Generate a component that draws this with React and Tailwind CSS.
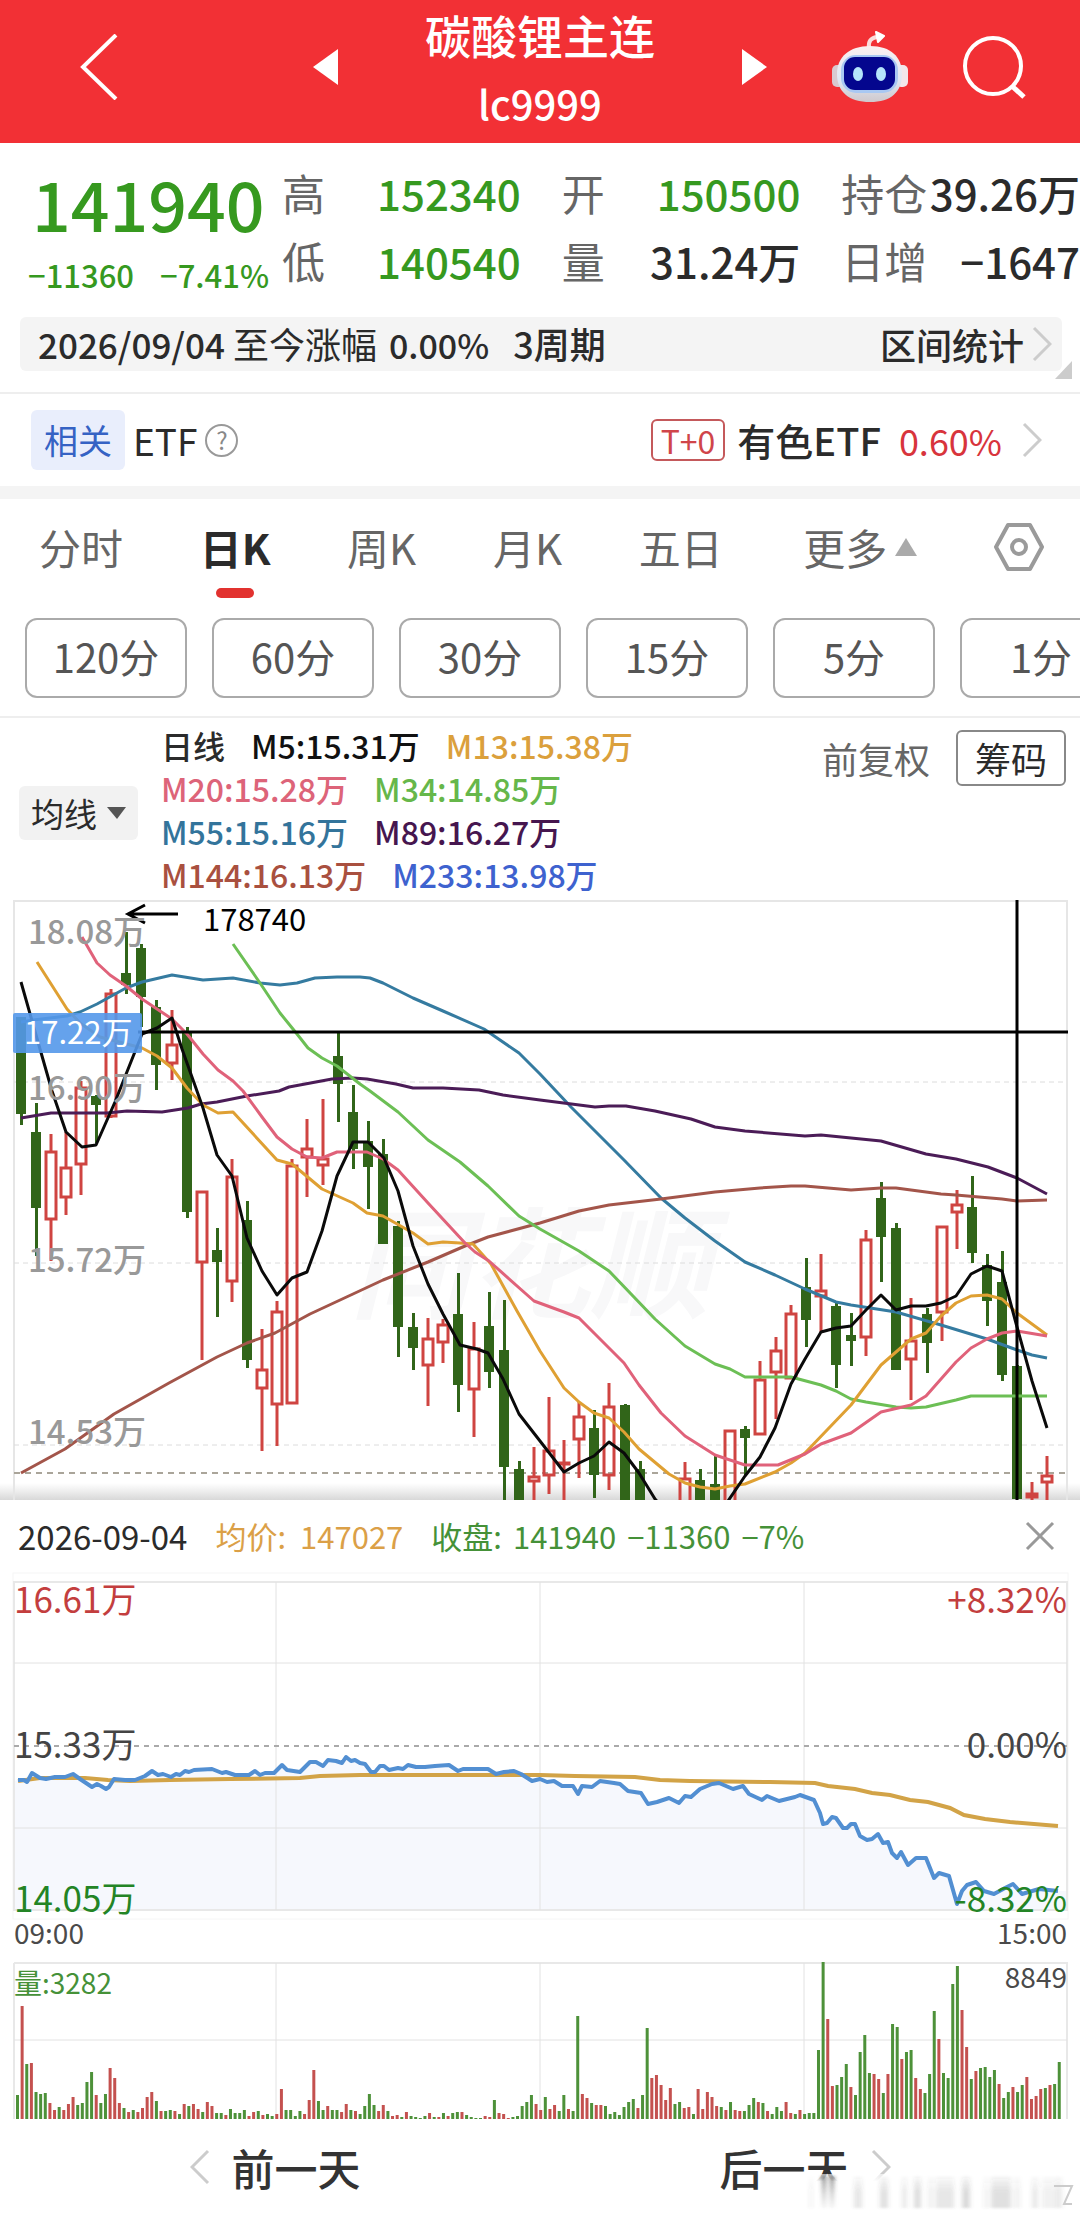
import React from "react";

const CANDLE_GREEN = "#316519";
const CANDLE_RED = "#cf4441";

/* Daily candles: [kind, high, bodyTop, bodyBottom, low] in chart units. */
const CANDLES = [
  ["g", 1016, 1016, 1113, 1124], ["g", 1102, 1131, 1207, 1255], ["r", 1133, 1150, 1219, 1260],
  ["r", 1131, 1166, 1197, 1214], ["r", 1080, 1086, 1164, 1194], ["g", 1094, 1095, 1104, 1142],
  ["r", 988, 992, 1116, 1117], ["g", 931, 972, 984, 993], ["g", 943, 947, 996, 1026],
  ["g", 999, 1006, 1064, 1089], ["r", 1009, 1043, 1063, 1079], ["g", 1026, 1030, 1211, 1217],
  ["r", 1190, 1190, 1262, 1359], ["g", 1227, 1249, 1261, 1316], ["r", 1158, 1175, 1281, 1301],
  ["g", 1200, 1219, 1359, 1367], ["r", 1328, 1368, 1388, 1450], ["r", 1300, 1310, 1404, 1445],
  ["r", 1158, 1164, 1403, 1403], ["r", 1118, 1147, 1157, 1196], ["r", 1098, 1157, 1165, 1184],
  ["g", 1032, 1055, 1083, 1121], ["g", 1084, 1111, 1148, 1168], ["g", 1120, 1140, 1166, 1208],
  ["g", 1138, 1153, 1243, 1243], ["g", 1220, 1225, 1326, 1356], ["g", 1312, 1326, 1347, 1369],
  ["r", 1317, 1337, 1365, 1405], ["r", 1318, 1323, 1342, 1362], ["g", 1272, 1313, 1384, 1411],
  ["r", 1321, 1347, 1389, 1436], ["g", 1291, 1325, 1371, 1387], ["g", 1299, 1349, 1466, 1510],
  ["g", 1460, 1468, 1510, 1510], ["r", 1446, 1475, 1481, 1510], ["r", 1396, 1449, 1475, 1493],
  ["r", 1439, 1461, 1464, 1510], ["r", 1401, 1415, 1439, 1477], ["g", 1409, 1427, 1474, 1497],
  ["r", 1382, 1405, 1475, 1489], ["g", 1403, 1404, 1510, 1510], ["g", 1460, 1468, 1510, 1510],
  null, null,
  ["r", 1461, 1477, 1510, 1510], ["g", 1468, 1479, 1510, 1510], ["g", 1454, 1483, 1510, 1510],
  ["r", 1429, 1429, 1510, 1510], ["g", 1425, 1428, 1437, 1474], ["r", 1360, 1378, 1434, 1434],
  ["r", 1336, 1349, 1372, 1418], ["r", 1304, 1312, 1378, 1378], ["g", 1257, 1286, 1319, 1346],
  ["r", 1253, 1289, 1296, 1331], ["g", 1301, 1305, 1364, 1387], ["g", 1312, 1334, 1340, 1365],
  ["r", 1229, 1238, 1337, 1355], ["g", 1181, 1197, 1236, 1281], ["g", 1222, 1227, 1369, 1369],
  ["r", 1297, 1339, 1359, 1399], ["g", 1307, 1313, 1342, 1372], ["r", 1225, 1225, 1312, 1340],
  ["r", 1189, 1203, 1212, 1248], ["g", 1175, 1206, 1252, 1262], ["g", 1253, 1264, 1300, 1325],
  ["g", 1250, 1281, 1374, 1380], ["g", 1364, 1365, 1498, 1498], ["r", 1481, 1492, 1497, 1500],
  ["r", 1455, 1474, 1482, 1500],
];

const MA_LINES = [
  { color: "#357ba0", points: "21,1021 33,1019 67,1015 80,1011 97,1003 126,987 142,981 172,974 203,979 218,978 233,977 260,982 280,984 297,982 315,977 337,976 360,976 370,977 383,982 413,997 443,1010 484,1028 519,1052 540,1073 571,1106 624,1159 661,1197 685,1217 715,1240 745,1261 775,1274 805,1288 836,1301 851,1304 896,1311 941,1324 987,1338 1017,1349 1032,1354 1047,1357" },
  { color: "#4b1c57", points: "21,1117 51,1112 107,1112 127,1110 162,1111 188,1107 201,1103 217,1101 247,1095 279,1090 289,1086 332,1078 353,1077 367,1078 396,1083 413,1087 443,1087 479,1089 503,1094 540,1099 595,1106 609,1105 626,1105 655,1110 691,1118 715,1126 745,1130 805,1135 821,1134 851,1137 881,1140 926,1153 956,1158 988,1166 1017,1177 1047,1193" },
  { color: "#a3554a", points: "21,1472 65,1448 114,1413 169,1382 217,1356 247,1342 275,1332 310,1313 353,1293 383,1279 428,1261 465,1245 488,1236 540,1222 579,1210 609,1204 661,1198 715,1191 760,1187 791,1185 805,1185 851,1189 881,1187 896,1187 941,1193 956,1194 1002,1198 1017,1200 1047,1199" },
  { color: "#6cbf55", points: "233,943 260,982 280,1012 297,1033 308,1047 322,1057 337,1065 360,1083 370,1090 398,1111 428,1139 460,1161 488,1185 519,1215 540,1228 579,1250 609,1270 655,1318 685,1345 715,1363 730,1368 745,1376 791,1376 821,1384 836,1390 851,1398 866,1401 896,1406 911,1407 926,1406 956,1399 971,1395 1047,1395" },
  { color: "#dfa033", points: "37,961 67,1008 80,1022 100,1036 142,1047 157,1055 172,1067 187,1087 203,1104 218,1112 233,1111 277,1159 292,1163 322,1188 353,1202 367,1212 383,1215 413,1232 428,1243 443,1241 460,1242 473,1243 491,1263 517,1310 540,1350 564,1387 579,1401 594,1412 609,1417 624,1431 639,1448 669,1473 685,1482 700,1486 715,1488 730,1485 745,1483 775,1471 791,1462 805,1452 851,1404 881,1364 896,1351 911,1338 926,1332 941,1315 956,1302 971,1295 987,1294 1002,1298 1017,1312 1047,1334" },
  { color: "#e0627a", points: "82,936 97,962 110,974 126,985 142,998 172,1018 187,1033 203,1053 218,1069 233,1080 243,1090 262,1116 277,1136 292,1148 307,1156 322,1157 337,1151 367,1151 383,1158 398,1169 428,1202 465,1242 475,1251 489,1260 534,1300 564,1311 579,1317 594,1332 624,1362 639,1384 661,1412 685,1435 715,1454 745,1464 778,1464 805,1453 821,1443 851,1432 881,1411 911,1404 926,1395 956,1361 971,1347 987,1338 1002,1332 1017,1330 1047,1335" },
  { color: "#0a0a0a", points: "21,981 40,1048 52,1090 66,1131 82,1146 96,1144 115,1101 142,1033 157,1027 172,1017 182,1048 203,1107 217,1154 232,1175 247,1237 262,1270 277,1294 292,1277 307,1271 322,1230 337,1175 353,1141 368,1141 384,1157 398,1190 413,1245 428,1283 443,1313 460,1344 477,1348 488,1352 503,1378 519,1413 540,1440 564,1471 579,1462 594,1455 609,1441 624,1452 639,1472 655,1498 670,1515 720,1515 728,1500 745,1475 760,1456 775,1427 791,1383 805,1358 821,1331 836,1327 851,1325 866,1309 881,1294 896,1309 911,1305 926,1305 941,1302 956,1295 971,1273 987,1265 1002,1270 1017,1326 1032,1380 1047,1427" },
];

const PRICE_LINE =
  "18,1779 24,1779 27,1781 32,1772 40,1777 46,1778 55,1776 65,1776 73,1773 80,1778 86,1782 92,1786 97,1783 101,1785 106,1788 109,1786 114,1778 125,1779 135,1779 145,1775 152,1770 158,1774 163,1773 171,1776 176,1773 180,1774 185,1770 189,1771 194,1769 212,1768 222,1772 226,1771 235,1774 249,1774 255,1770 260,1774 265,1772 274,1772 282,1764 287,1769 300,1771 310,1761 316,1761 323,1765 328,1759 336,1760 342,1762 346,1756 351,1760 355,1759 360,1762 365,1763 371,1771 375,1771 380,1765 384,1765 389,1769 398,1767 403,1768 408,1764 416,1766 425,1766 435,1765 449,1764 458,1770 463,1768 488,1768 496,1773 504,1771 514,1770 521,1773 532,1780 540,1778 547,1781 554,1780 562,1785 573,1785 578,1793 582,1785 592,1786 600,1780 614,1782 620,1783 628,1790 641,1792 648,1803 657,1801 669,1797 679,1802 685,1795 691,1796 700,1788 712,1783 719,1782 733,1788 743,1785 749,1793 762,1799 767,1795 779,1800 795,1796 800,1794 814,1799 820,1812 823,1823 827,1822 832,1816 836,1817 843,1827 847,1827 851,1823 855,1823 860,1835 867,1839 872,1838 878,1833 883,1842 888,1841 892,1852 897,1857 901,1851 908,1864 916,1857 926,1857 934,1877 939,1872 949,1875 957,1903 962,1890 967,1884 976,1881 984,1890 994,1893 1005,1887 1013,1883 1022,1893 1039,1888 1058,1890";

const AVERAGE_LINE =
  "18,1780 40,1777 85,1777 108,1779 130,1780 170,1779 230,1778 300,1777 320,1775 360,1774 540,1774 575,1775 635,1776 660,1779 690,1780 770,1781 815,1782 828,1785 855,1788 872,1792 890,1794 910,1799 928,1801 950,1807 964,1814 985,1818 1010,1821 1058,1825";

/* Minute volumes: colour letter followed by the bar height. */
const VOLUMES = (
  "g24 r113 g55 r56 g27 g25 g26 r16 r9 g12 r9 r15 r22 g14 g16 g37 g47 r24 g16 g25 r51 r41 r16 g11 r7 g9 r7 r11 r22 r27 g18 r8 g8 g9 r8 g5 r15 g13 r15 r10 g7 r17 r13 g6 g6 r4 g10 g6 g6 g9 r3 r7 g8 r4 g5 g3 r5 r30 g9 g9 g3 g8 r5 r19 r49 g18 g9 r13 g9 g9 r7 r15 g9 r8 g5 g13 g25 g14 r8 r14 g8 r3 r4 g2 r7 g3 g2 g1 g3 r6 g2 r2 g6 r3 g6 g7 r7 g4 g2 g1 g1 r3 r2 g19 r6 r5 r1 g2 g3 g13 g17 g24 r15 " +
  "r9 g22 r10 r14 g8 g24 r10 g8 g103 r25 r21 g16 r14 r14 g13 g5 g7 g4 g12 g17 g20 r11 g24 g91 r41 r44 r34 r19 r31 g15 g17 r11 r12 g5 r30 r10 r27 r22 r13 g12 r9 g17 r9 r8 g8 g14 g21 r17 g16 r8 g5 g12 g8 r17 r6 g5 r9 g5 g6 g6 g69 g157 r100 r33 g34 g42 g55 r32 g24 g67 g84 g46 r45 r40 g26 r45 g95 g92 r60 g67 g69 r41 r30 g26 g45 g108 r80 g46 g41 g135 g153 r109 r72 g40 r48 g51 g52 g42 g49 r35 g21 g27 r32 g27 g34 r42 r20 r23 r30 g31 r34 g35 g57"
)
  .split(" ")
  .map((v) => ({ up: v[0] === "r", height: Number(v.slice(1)) }));

function Chevron({ direction = "right", className }) {
  return (
    <svg viewBox="0 0 20 36" fill="none" stroke="currentColor" strokeWidth="3" className={className} aria-hidden="true">
      <path d={direction === "right" ? "M2 2 L18 18 L2 34" : "M18 2 L2 18 L18 34"} />
    </svg>
  );
}

function Robot() {
  return (
    <svg viewBox="0 0 78 72" className="h-[72px] w-[78px]" aria-hidden="true">
      <defs>
        <linearGradient id="shell" x1="0" y1="0" x2="0" y2="1">
          <stop offset="0" stopColor="#fbeff0" />
          <stop offset="0.6" stopColor="#dfe8f4" />
          <stop offset="1" stopColor="#cfc8cc" />
        </linearGradient>
      </defs>
      <path d="M38 17 C37 10 40 7 46 6" fill="none" stroke="#fbdcdc" strokeWidth="4" />
      <path d="M45 1 L53 5 L47 11 Z" fill="#fff" stroke="#fff" strokeWidth="2" strokeLinejoin="round" />
      <rect x="1" y="34" width="12" height="22" rx="5" fill="#d9c9d0" />
      <rect x="65" y="34" width="12" height="22" rx="5" fill="#f3e6ea" />
      <path d="M39 15 C60 15 71 26 71 43 C71 61 60 71 39 71 C18 71 6 61 6 43 C6 26 18 15 39 15 Z" fill="url(#shell)" />
      <rect x="10" y="24" width="57" height="38" rx="15" fill="#a9c8f2" />
      <rect x="13" y="26" width="51" height="33" rx="11" fill="#04068e" />
      <ellipse cx="27" cy="43" rx="5" ry="7" fill="#b5e4fb" />
      <ellipse cx="50" cy="43" rx="5" ry="7" fill="#b5e4fb" />
    </svg>
  );
}

function Header() {
  return (
    <header className="grid grid-cols-[1fr_454px_1fr] items-center bg-[#f23035] pt-2.5 pb-[19px] text-white">
      <div className="pl-20">
        <button type="button" aria-label="返回" className="block">
          <svg viewBox="0 0 38 66" fill="none" stroke="currentColor" strokeWidth="4" className="h-[66px] w-[38px]">
            <path d="M36 1 L3 33 L36 65" />
          </svg>
        </button>
      </div>
      <div className="flex items-center justify-between">
        <button type="button" aria-label="上一个">
          <svg viewBox="0 0 25 36" className="h-9 w-[25px]" fill="currentColor"><path d="M25 0 V36 L0 18 Z" /></svg>
        </button>
        <h1 className="flex flex-col items-center gap-6 font-medium">
          <span className="text-[46px] leading-[48px]">碳酸锂主连</span>
          <span className="text-[40px] leading-[42px]">lc9999</span>
        </h1>
        <button type="button" aria-label="下一个">
          <svg viewBox="0 0 25 36" className="h-9 w-[25px]" fill="currentColor"><path d="M0 0 V36 L25 18 Z" /></svg>
        </button>
      </div>
      <div className="flex items-center justify-between pr-[54px] pl-16">
        <button type="button" aria-label="智能助手"><Robot /></button>
        <button type="button" aria-label="搜索">
          <svg viewBox="0 0 64 64" className="h-16 w-16" fill="none" stroke="currentColor" strokeWidth="4">
            <circle cx="31" cy="31" r="28" />
            <path d="M51 52 L62 62" strokeWidth="5" />
          </svg>
        </button>
      </div>
    </header>
  );
}

function Stat({ label, value, green }) {
  return (
    <div className="flex items-baseline justify-between">
      <dt className="text-[43px] text-[#666]">{label}</dt>
      <dd className={green ? "text-[42px] font-medium text-[#36991f]" : "text-[42px] font-medium text-[#2b2b2b]"}>{value}</dd>
    </div>
  );
}

function Quote() {
  return (
    <section className="pb-[21px]">
      <div className="flex pb-[22px]">
        <div className="flex w-[282px] shrink-0 flex-col gap-[17px] pt-[25px] pl-7 text-[#36991f]">
          <strong className="pl-1 text-[68px] leading-[70px] font-medium">141940</strong>
          <div className="flex gap-[26px] text-[31px] leading-10 font-medium">
            <span>−11360</span>
            <span>−7.41%</span>
          </div>
        </div>
        <dl className="grid flex-1 grid-cols-3 content-start gap-x-[41px] gap-y-[15px] pt-[23px] leading-[52px] whitespace-nowrap">
          <Stat label="高" value="152340" green />
          <Stat label="开" value="150500" green />
          <Stat label="持仓" value="39.26万" />
          <Stat label="低" value="140540" green />
          <Stat label="量" value="31.24万" />
          <Stat label="日增" value="−1647" />
        </dl>
      </div>
      <div className="relative mr-[18px] ml-5 flex items-center justify-between rounded-md bg-[#f4f4f4] pr-[10px] pl-[18px] text-4xl leading-[53px] text-[#2b2b2b]">
        <p className="flex items-baseline">
          <span className="text-[35px] font-medium">2026/09/04</span>
          <span className="ml-2">至今涨幅</span>
          <span className="ml-3 text-[34px] font-medium">0.00%</span>
          <span className="ml-6 font-medium">3周期</span>
        </p>
        <button type="button" className="flex items-center gap-2 font-medium">
          区间统计
          <Chevron className="h-9 w-5 text-[#ccc]" />
        </button>
        <svg viewBox="0 0 17 18" className="absolute -right-[10px] -bottom-2 h-[18px] w-[17px]" aria-hidden="true">
          <path d="M17 0 V18 H0 Z" fill="#ccc" />
        </svg>
      </div>
    </section>
  );
}

function RelatedEtf() {
  return (
    <section className="flex items-center justify-between border-t-2 border-[#eee] pr-[38px] pl-[31px] py-4 text-[#2b2b2b]">
      <div className="flex items-center gap-2 text-[37px] leading-[60px]">
        <span className="rounded-md bg-[#e9eefc] px-[13px] text-[34px] text-[#3562c4]">相关</span>
        <span>ETF</span>
        <button type="button" aria-label="说明" className="flex h-[33px] w-[33px] items-center justify-center rounded-full border-2 border-[#999] text-2xl leading-none text-[#888]">?</button>
      </div>
      <a href="#etf" className="flex items-center text-4xl leading-[60px]">
        <span className="mr-3 rounded-md border-2 border-[#c4595b] px-2 text-[32px] leading-[38px] text-[#d0454a]">T+0</span>
        <span className="mr-[18px] text-[38px] font-medium">有色ETF</span>
        <span className="mr-5 text-[#d8343c]">0.60%</span>
        <Chevron className="h-9 w-5 text-[#ccc]" />
      </a>
    </section>
  );
}

const PERIODS = ["分时", "日K", "周K", "月K", "五日"];
const MINUTES = ["120分", "60分", "30分", "15分", "5分", "1分"];

function Periods() {
  return (
    <section className="border-t-[13px] border-b-2 border-t-[#f4f4f4] border-b-[#eee] pt-[23px] pb-[18px]">
      <nav className="flex items-start justify-between pr-9 pl-[39px] text-[42px] leading-[50px] text-[#666]">
        {PERIODS.map((p) =>
          p === "日K" ? (
            <button key={p} type="button" aria-current="true" className="flex flex-col items-center gap-4 font-bold text-[#2b2b2b]">
              {p}
              <span className="h-2.5 w-[38px] rounded-full bg-[#e2322f]" />
            </button>
          ) : (
            <button key={p} type="button">{p}</button>
          )
        )}
        <button type="button" className="flex items-center gap-2 pl-1">
          更多
          <svg viewBox="0 0 22 18" className="h-[18px] w-[22px]" fill="#aaa"><path d="M11 0 L22 18 H0 Z" /></svg>
        </button>
        <button type="button" aria-label="设置">
          <svg viewBox="0 0 50 48" className="h-[50px] w-[50px]" fill="none" stroke="#9a9a9a" strokeWidth="4" strokeLinejoin="round">
            <path d="M14 2 H36 L48 24 L36 46 H14 L2 24 Z" />
            <circle cx="25" cy="24" r="7" />
          </svg>
        </button>
      </nav>
      <div className="mt-5 flex gap-[25px] overflow-hidden pl-[25px] text-[40px] text-[#555]">
        {MINUTES.map((m) => (
          <button key={m} type="button" className="h-20 w-[162px] shrink-0 rounded-xl border-2 border-[#aaa] pb-1">{m}</button>
        ))}
      </div>
    </section>
  );
}

function Averages() {
  return (
    <section className="flex items-start pr-[14px] pl-[19px] pt-1.5 pb-1">
      <button type="button" className="mt-[62px] flex w-[119px] shrink-0 items-center justify-center gap-2.5 rounded-md bg-[#f2f2f2] text-[33px] leading-[54px] text-[#2b2b2b]">
        均线
        <svg viewBox="0 0 19 12" className="h-3 w-[19px]" fill="#555"><path d="M0 0 H19 L10 12 Z" /></svg>
      </button>
      <ul className="ml-[23px] flex-1 text-[32px] leading-[43px] font-medium whitespace-nowrap">
        <li className="flex gap-[26px]">
          <span className="text-[#2b2b2b]">日线</span>
          <span className="text-[#111]">M5:15.31万</span>
          <span className="text-[#dba03c]">M13:15.38万</span>
        </li>
        <li className="flex gap-[26px]">
          <span className="text-[#dd6479]">M20:15.28万</span>
          <span className="text-[#66b74a]">M34:14.85万</span>
        </li>
        <li className="flex gap-[26px]">
          <span className="text-[#33749b]">M55:15.16万</span>
          <span className="text-[#46164f]">M89:16.27万</span>
        </li>
        <li className="flex gap-[26px]">
          <span className="text-[#a9503f]">M144:16.13万</span>
          <span className="text-[#3e62cf]">M233:13.98万</span>
        </li>
      </ul>
      <div className="mt-1.5 flex items-center gap-[26px] text-4xl">
        <button type="button" className="text-[#666]">前复权</button>
        <button type="button" className="rounded-md border-2 border-[#888] px-[17px] leading-[52px] text-[#2b2b2b]">筹码</button>
      </div>
    </section>
  );
}

function Candle({ x, candle }) {
  const [kind, high, top, bottom, low] = candle;
  if (kind === "g") {
    return (
      <g fill={CANDLE_GREEN}>
        <rect x={x - 1} y={high} width="3" height={low - high} />
        <rect x={x - 5} y={top} width="10" height={bottom - top} />
      </g>
    );
  }
  return (
    <g stroke={CANDLE_RED} strokeWidth="3" fill="none">
      <path d={`M${x} ${high} V${top} M${x} ${bottom} V${low}`} />
      <rect x={x - 5} y={top + 1} width="10" height={Math.max(bottom - top - 2, 1)} />
    </g>
  );
}

function DailyChart() {
  return (
    <svg viewBox="0 899 1080 600" className="block w-full" role="img" aria-label="日K线图">
      <defs>
        <linearGradient id="fade" x1="0" y1="0" x2="0" y2="1">
          <stop offset="0" stopColor="#ddd" stopOpacity="0" />
          <stop offset="1" stopColor="#d8d8d8" />
        </linearGradient>
      </defs>
      <rect x="0" y="1482" width="1080" height="17" fill="url(#fade)" />
      <text x="350" y="1308" fontSize="120" fontWeight="700" fontStyle="italic" fill="#f8f8f9">同花顺</text>
      <path d="M14 1499 V900 H1067 V1499" fill="none" stroke="#e6e6e6" strokeWidth="2" />
      <path d="M14 1081 H1067 M14 1262 H1067 M14 1444 H1067" stroke="#dcdcdc" strokeWidth="1" strokeDasharray="5 4" />
      <path d="M14 1472 H1067" stroke="#aaa59a" strokeWidth="2" strokeDasharray="6 5" />
      {CANDLES.map((c, i) => c && <Candle key={i} x={Math.round(20.5 + 15.1 * i)} candle={c} />)}
      <g fill="none" strokeWidth="3" strokeLinejoin="round">
        {MA_LINES.map((l) => <polyline key={l.color} points={l.points} stroke={l.color} />)}
      </g>
      <path d="M138 1031 H1068 M1017 899 V1499" stroke="#000" strokeWidth="3" />
      <path d="M178 913 H128 M145 904 L128 913 L145 922" fill="none" stroke="#000" strokeWidth="3" />
      <text x="203" y="930" fontSize="31" fill="#000">178740</text>
      <g fontSize="33" fontWeight="500" fill="#999">
        <text x="28" y="943">18.08万</text>
        <text x="28" y="1099">16.90万</text>
        <text x="28" y="1271">15.72万</text>
        <text x="28" y="1443">14.53万</text>
      </g>
      <rect x="13" y="1012" width="129" height="40" rx="2" fill="#5498ea" fillOpacity="0.9" />
      <text x="24" y="1043" fontSize="31" fill="#fff">17.22万</text>
    </svg>
  );
}

function DayHeader() {
  return (
    <div className="flex items-center justify-between bg-white pr-[25px] pl-[18px] text-[31px] leading-[72px]">
      <p className="flex gap-7 whitespace-nowrap">
        <span className="text-[33px] text-[#2b2b2b]">2026-09-04</span>
        <span className="flex gap-[14px] text-[#dba047]"><span>均价:</span><span>147027</span></span>
        <span className="flex gap-[11px] text-[#459138]"><span>收盘:</span><span>141940</span><span>−11360</span><span>−7%</span></span>
      </p>
      <button type="button" aria-label="关闭">
        <svg viewBox="0 0 30 30" className="h-[30px] w-[30px]" fill="none" stroke="#999" strokeWidth="3">
          <path d="M2 2 L28 28 M28 2 L2 28" />
        </svg>
      </button>
    </div>
  );
}

function DayChart() {
  return (
    <svg viewBox="0 1571 1080 549" className="block w-full" role="img" aria-label="分时图">
      <rect x="13" y="1572" width="1055" height="346" fill="none" stroke="#f6f6f6" strokeWidth="1" />
      <polygon points={`14,1780 ${PRICE_LINE} 1067,1890 1067,1908 14,1908`} fill="#f6f8fd" />
      <g fill="none" stroke="#e2e2e2" strokeWidth="1">
        <path d="M14 1581 H1067 V1909 H14 Z" strokeWidth="2" stroke="#e8e8e8" />
        <path d="M14 1662 H1067 M14 1827 H1067 M276 1581 V1909 M540 1581 V1909 M804 1581 V1909" />
        <path d="M14 1962 H1067 V2118 M14 1962 V2118" strokeWidth="2" stroke="#e8e8e8" />
        <path d="M14 2039 H1067 M276 1962 V2118 M540 1962 V2118 M804 1962 V2118" />
      </g>
      <path d="M14 1745 H1067" stroke="#aaa" strokeWidth="2" strokeDasharray="5 5" />
      <polyline points={AVERAGE_LINE} fill="none" stroke="#d2a347" strokeWidth="4" />
      <polyline points={PRICE_LINE} fill="none" stroke="#528fd2" strokeWidth="4" strokeLinejoin="round" />
      <g fontSize="35">
        <text x="14" y="1612" fill="#c33e3e">16.61万</text>
        <text x="14" y="1757" fill="#444">15.33万</text>
        <text x="14" y="1911" fill="#238425">14.05万</text>
        <g textAnchor="end">
          <text x="1067" y="1612" fill="#c33e3e">+8.32%</text>
          <text x="1067" y="1757" fill="#444">0.00%</text>
          <text x="1067" y="1911" fill="#238425">-8.32%</text>
        </g>
      </g>
      {VOLUMES.map((v, i) => (
        <rect key={i} x={16 + 4.63 * i} y={2118 - v.height} width="3" height={v.height} fill={v.up ? "#c4514f" : "#4d9139"} />
      ))}
      <g fontSize="28" fill="#4a4a4a">
        <text x="14" y="1943">09:00</text>
        <text x="1067" y="1943" textAnchor="end">15:00</text>
        <text x="14" y="1993" fill="#459138">量:3282</text>
        <text x="1067" y="1987" textAnchor="end">8849</text>
      </g>
    </svg>
  );
}

/* Faint vertical streaks over the bottom corner: [x, width, opacity]. */
const STREAKS = [
  [6, 2, 0.15], [18, 4, 0.6], [26, 4, 0.6], [50, 8, 0.2], [76, 8, 0.25], [98, 5, 0.18],
  [110, 7, 0.28], [124, 6, 0.12], [132, 18, 0.2], [158, 8, 0.3], [180, 4, 0.12], [187, 20, 0.26],
  [210, 6, 0.12], [228, 6, 0.18], [238, 14, 0.12], [252, 6, 0.18],
];

function DayPager() {
  return (
    <nav className="relative grid grid-cols-2 px-2.5 pt-[21px] pb-7 text-[43px] leading-[50px] font-medium text-[#333]">
      <button type="button" className="flex items-center justify-center gap-[22px]">
        <Chevron direction="left" className="h-9 w-5 text-[#ccc]" />
        前一天
      </button>
      <button type="button" className="flex items-center justify-center gap-[22px]">
        后一天
        <Chevron className="h-9 w-5 text-[#ccc]" />
      </button>
      <svg viewBox="0 0 272 38" className="pointer-events-none absolute right-1 bottom-2 h-[38px] w-[272px]" aria-hidden="true">
        <defs>
          <linearGradient id="veil" x1="0" y1="0" x2="0" y2="1">
            <stop offset="0" stopColor="#fff" stopOpacity="0.6" />
            <stop offset="0.2" stopColor="#fff" />
          </linearGradient>
          <linearGradient id="streak" x1="0" y1="0" x2="0" y2="1">
            <stop offset="0" stopColor="#333" stopOpacity="0.1" />
            <stop offset="0.5" stopColor="#555" stopOpacity="0.7" />
            <stop offset="1" stopColor="#555" stopOpacity="0.7" />
          </linearGradient>
          <linearGradient id="streakDark" x1="0" y1="0" x2="0" y2="1">
            <stop offset="0" stopColor="#222" />
            <stop offset="1" stopColor="#999" stopOpacity="0.2" />
          </linearGradient>
          <filter id="soft"><feGaussianBlur stdDeviation="2 1" /></filter>
        </defs>
        <rect x="0" y="0" width="272" height="38" fill="url(#veil)" />
        <g filter="url(#soft)">
          {STREAKS.map(([x, w, o]) => (
            <rect key={x} x={x} y="2" width={w} height="32" opacity={o} fill={o > 0.5 ? "url(#streakDark)" : "url(#streak)"} />
          ))}
        </g>
        <path d="M250 12 H268 L260 30 H268" fill="none" stroke="#ccc" strokeWidth="2" />
      </svg>
    </nav>
  );
}

export default function App() {
  return (
    <main className="w-full overflow-hidden bg-white font-['Noto_Sans_CJK_SC','Noto_Sans',sans-serif]">
      <Header />
      <Quote />
      <RelatedEtf />
      <Periods />
      <Averages />
      <DailyChart />
      <DayHeader />
      <DayChart />
      <DayPager />
    </main>
  );
}
